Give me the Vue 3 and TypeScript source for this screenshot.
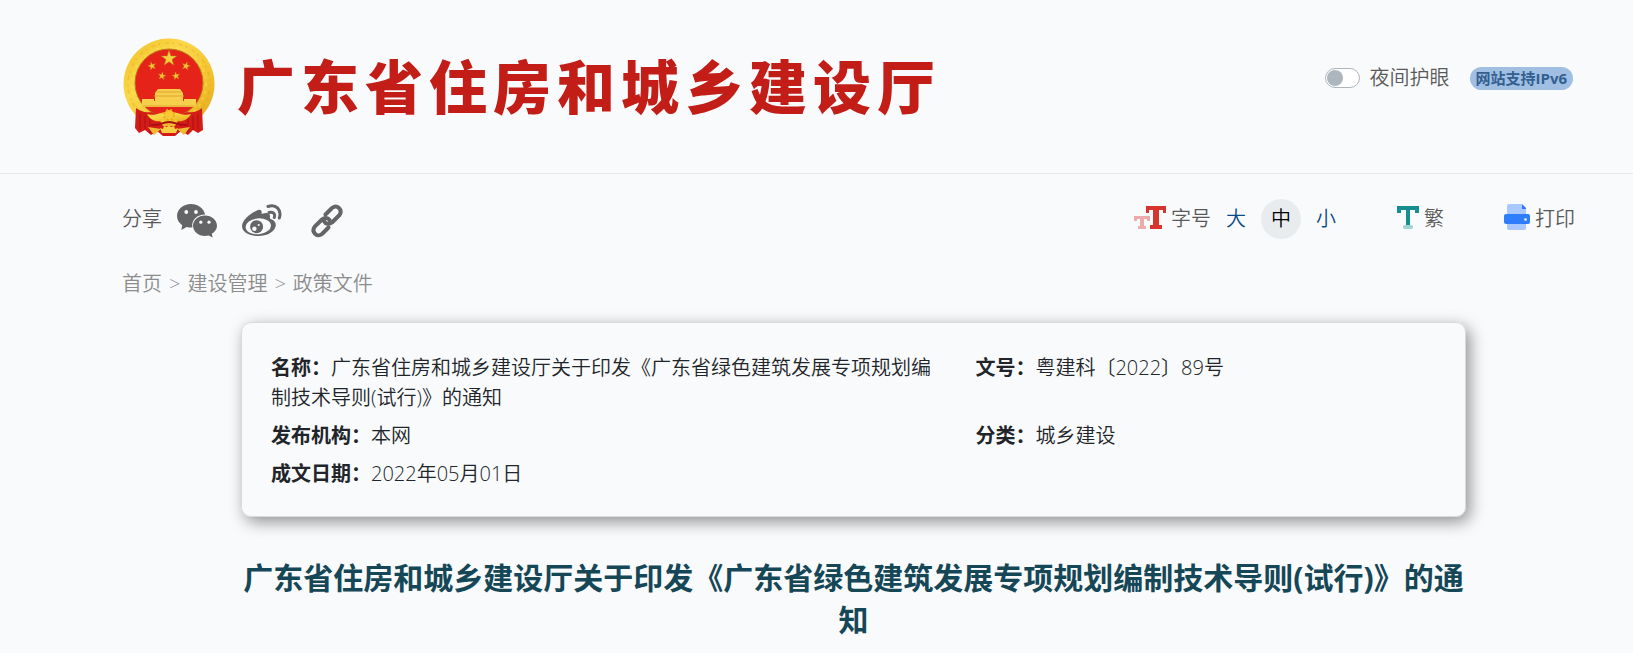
<script setup lang="ts">
import { ref } from 'vue'

interface Field {
  label: string
  value: string
}

const siteName = '广东省住房和城乡建设厅'
const docTitle = '广东省住房和城乡建设厅关于印发《广东省绿色建筑发展专项规划编制技术导则(试行)》的通知'

const nightMode = ref(false)
const sizes = ['大', '中', '小']
const activeSize = ref('中')

const crumbs = ['首页', '建设管理', '政策文件']

const fields: Field[] = [
  { label: '名称', value: docTitle },
  { label: '文号', value: '粤建科〔2022〕89号' },
  { label: '发布机构', value: '本网' },
  { label: '分类', value: '城乡建设' },
  { label: '成文日期', value: '2022年05月01日' },
]

const star = 'M0-10 2.3-3.1 9.5-3.1 3.7 1.2 5.9 8.1 0 3.9-5.9 8.1-3.7 1.2-9.5-3.1-2.3-3.1Z'
const smallStars = [
  'translate(29 28) rotate(-15) scale(.44)',
  'translate(63 28) rotate(15) scale(.44)',
  'translate(39 38) rotate(10) scale(.42)',
  'translate(53 38) rotate(-10) scale(.42)',
]
</script>

<template>
  <div class="page">
    <header class="site-header">
      <a class="brand" href="#">
        <svg class="emblem" viewBox="0 0 92 98" aria-hidden="true">
          <defs>
            <linearGradient id="gold" x1="0" y1="0" x2="1" y2="1">
              <stop offset="0" stop-color="#efbf24" />
              <stop offset=".35" stop-color="#fbd84a" />
              <stop offset=".7" stop-color="#f2c02c" />
              <stop offset="1" stop-color="#dda51c" />
            </linearGradient>
          </defs>
          <circle cx="46" cy="46" r="45.5" fill="url(#gold)" />
          <circle cx="46" cy="46" r="41" fill="none" stroke="#d9a21c" stroke-width="2" stroke-dasharray="2 5 4 3" opacity=".3" />
          <circle cx="46" cy="46" r="37" fill="none" stroke="#ffe268" stroke-width="2" stroke-dasharray="3 4" opacity=".4" />
          <circle cx="46" cy="45" r="34" fill="#e52318" stroke="#b8791a" stroke-width="1" />
          <path d="M13 70 C22 77 27 72 33 76 L40 88 L52 88 L59 76 C66 72 71 77 79 70 L80 92 L75 95 L70 92 L65 97 L58 93 L52 98 L40 98 L34 93 L28 97 L22 92 L16 95 L12 90Z" fill="#d31b18" />
          <path d="M17 76v16M22 78v13M27 79v16M65 79v15M70 78v14M75 76v16" stroke="#970f11" stroke-width="1" opacity=".65" />
          <path :d="star" transform="translate(46 20.500) scale(.82)" fill="#f9cf42" stroke="#b97614" stroke-width=".6" />
          <path v-for="t in smallStars" :key="t" :d="star" :transform="t" fill="#f5c538" stroke="#c07a17" stroke-width=".8" />
          <path d="M35 51h22l3 4v3H32v-3Z M32 57h28v6H32Z M19 61h12v2h30v-2h12v8H19Z" fill="#f7cf4d" />
          <path d="M34 54h24M31 58h30M20 68h52" stroke="#dca632" stroke-width="1" />
          <path d="M24 76 C34 79 38 72 46 75 C54 72 58 79 68 76 C64 84 55 85 50 81 L46 79 L42 81 C37 85 28 84 24 76Z" fill="url(#gold)" />
          <circle cx="46" cy="77" r="5" fill="#f8c832" stroke="#e8aa20" stroke-width="2" stroke-dasharray="2 2" />
          <path d="M25 89 38 91 31 97Z M67 89 54 91 61 97Z" fill="#eebb32" />
          <path d="M37 90l3 1 1-3 3 1 2-2 2 2 3-1 1 3 3-1-2 5H39Z" fill="#f8cf43" />
          <path d="M28 87C36 88 39 84 46 84S56 88 64 87" fill="none" stroke="#a90f12" stroke-width="2" />
        </svg>
        <span class="site-name">{{ siteName }}</span>
      </a>
      <div class="header-tools">
        <label class="night">
          <input v-model="nightMode" type="checkbox" role="switch" />
          <span>夜间护眼</span>
        </label>
        <span class="ipv6">网站支持IPv6</span>
      </div>
    </header>

    <div class="toolbar">
      <div class="share">
        <span>分享</span>
        <button type="button" aria-label="微信">
          <svg width="40" height="34" viewBox="0 0 40 34">
            <path d="M14 0C6.300 0 0 5.400 0 12c0 3.700 2 7 5.200 9.200L4.300 26l5.400-3.100c1.500.4 3 .5 4.500.5l1.200-.1C14 16 20.500 10.500 28.200 10.600 26.800 4.500 21 0 14 0Z" fill="#646567" />
            <path d="M28 11.500c-6.600 0-12 4.600-12 10.200S21.400 32 28 32c1.300 0 2.500-.2 3.700-.5l4 2-.9-3.700c3.200-1.900 5.200-4.800 5.200-8.100 0-5.600-5.400-10.200-12-10.200Z" fill="#646567" />
            <g fill="#f9fafc">
              <circle cx="9.300" cy="8" r="1.900" /><circle cx="19" cy="8" r="1.900" />
              <circle cx="23.800" cy="18.200" r="1.600" /><circle cx="32" cy="18.200" r="1.600" />
            </g>
          </svg>
        </button>
        <button type="button" aria-label="微博">
          <svg width="40" height="34" viewBox="0 0 40 34">
            <path d="M14 7C18 4.500 20.500 6 19.500 10c5-2 9-1.500 8.500 3-.2 1-.3 1.600.7 2 4 1.400 5.500 4 5 7C32.500 28 25 32 16.500 32S0 28.500 0 22C0 17 7 10 14 7Z" fill="#646567" />
            <ellipse cx="16.300" cy="22.300" rx="12.700" ry="7.900" transform="rotate(-5 16.300 22.300)" fill="#f9fafc" />
            <circle cx="14.600" cy="22.700" r="6.500" fill="#646567" />
            <circle cx="12.400" cy="24.700" r="2.200" fill="#f9fafc" />
            <circle cx="16.700" cy="21" r="1.100" fill="#f9fafc" />
            <path d="M26 2.500C34-.5 40 6 37.300 14M27 8.500c4-1 6.500 1.200 5.300 5" fill="none" stroke="#646567" stroke-width="3" stroke-linecap="round" />
          </svg>
        </button>
        <button type="button" aria-label="复制链接">
          <svg width="40" height="34" viewBox="0 0 40 34">
            <g fill="none" stroke="#646567" stroke-width="4" stroke-linecap="round" stroke-linejoin="round">
              <path d="M18.500 10.500 25 4c5-4 11 1.500 7.500 7L25 18.500c-3 2.400-6.500 1.500-8-1.500" />
              <path d="M21.500 23.500 15 30c-5 4-11-2-7.300-7.300L15 15.500c3-2.600 7-1.500 8 1.500" />
            </g>
          </svg>
        </button>
      </div>

      <div class="options">
        <div class="font-size" role="group" aria-label="字号">
          <span class="caption">
            <svg width="32" height="24" viewBox="0 0 32 24" aria-hidden="true">
              <path d="M0 11h16v5h-3v-2h-3v7h2v3H4v-3h2v-7H3v2H0Z" fill="#ecacad" />
              <path d="M12 1h20v7h-3V5h-4v15h3v4H16v-4h3V5h-4v3h-3Z" fill="#d7342e" />
            </svg>
            <span>字号</span>
          </span>
          <button
            v-for="s in sizes"
            :key="s"
            type="button"
            class="size"
            :class="{ active: s === activeSize }"
            :aria-pressed="s === activeSize"
            @click="activeSize = s"
          >{{ s }}</button>
        </div>
        <button type="button" class="action">
          <svg width="22" height="24" viewBox="0 0 22 24" aria-hidden="true">
            <path d="M0 1h22v7h-4V5h-5v15H9V5H4v3H0Z" fill="#178f90" />
            <rect x="6" y="20" width="10" height="4" rx="2" fill="#a0d1d3" />
          </svg>
          <span>繁</span>
        </button>
        <button type="button" class="action">
          <svg width="26" height="26" viewBox="0 0 26 26" aria-hidden="true">
            <path d="M5 0h13v5h4v6H3V2q0-2 2-2Z" fill="#a8c8ff" />
            <path d="M18 0l4 4v1h-4Z" fill="#2b78f5" />
            <path d="M3 16h19v8q0 2-2 2H5q-2 0-2-2Z" fill="#a8c8ff" />
            <rect y="10" width="26" height="10" rx="2" fill="#2d7dfd" />
            <circle cx="21.500" cy="15.500" r="1.300" fill="#fff" />
          </svg>
          <span>打印</span>
        </button>
      </div>
    </div>

    <nav class="crumbs" aria-label="当前位置">
      <template v-for="(c, i) in crumbs" :key="c">
        <span v-if="i > 0">&gt;</span>
        <a href="#">{{ c }}</a>
      </template>
    </nav>

    <main class="article">
      <dl class="info">
        <div v-for="f in fields" :key="f.label">
          <dt>{{ f.label }}：</dt>
          <dd>{{ f.value }}</dd>
        </div>
      </dl>
      <h1>{{ docTitle }}</h1>
    </main>
  </div>
</template>

<style>
body {
  background: #f9fafc;
}
</style>

<style scoped>
.page {
  color: #212529;
  font-family: "Open Sans", "Noto Sans CJK SC", sans-serif;
  font-size: 20px;
  font-weight: 350;
  line-height: 30px;
}

a {
  color: inherit;
  text-decoration: none;
}

button {
  display: flex;
  align-items: center;
  margin: 0;
  padding: 0;
  border: 0;
  background: none;
  color: inherit;
  font: inherit;
  cursor: pointer;
}

svg {
  display: block;
  flex: none;
}

.site-header {
  display: flex;
  justify-content: space-between;
  padding: 38px 60px 37px 123px;
  border-bottom: 1px solid #e4e7eb;
}

.brand {
  display: flex;
  align-items: center;
  gap: 22px;
}

.emblem {
  width: 92px;
  height: 98px;
}

.site-name {
  color: #c21e17;
  font-size: 58px;
  font-weight: 900;
  line-height: 76px;
  letter-spacing: 6px;
  white-space: nowrap;
}

.header-tools {
  display: flex;
  align-items: center;
  align-self: flex-start;
  gap: 20px;
  padding-top: 25px;
  color: #595959;
}

.night {
  display: flex;
  align-items: center;
  gap: 10px;
}

.night input {
  display: flex;
  align-items: center;
  box-sizing: border-box;
  width: 35px;
  height: 20px;
  margin: 0;
  padding: 1px;
  border: 1px solid #adb5bd;
  border-radius: 10px;
  background: #fff;
  appearance: none;
}

.night input::before {
  width: 16px;
  height: 16px;
  border-radius: 50%;
  background: #adb5bd;
  content: "";
}

.night input:checked {
  justify-content: flex-end;
}

.ipv6 {
  padding: 0 6px;
  border-radius: 12px;
  background: #a0bfe3;
  color: #335f91;
  font-size: 15px;
  font-weight: 700;
  line-height: 23px;
}

.toolbar {
  display: flex;
  align-items: center;
  justify-content: space-between;
  padding: 25px 58px 0 122px;
  color: #595959;
}

.share {
  display: flex;
  align-items: center;
  gap: 25px;
}

.share span {
  margin-right: -10px;
}

.share svg {
  margin-top: 4px;
}

.options,
.font-size {
  display: flex;
  align-items: center;
}

.options {
  gap: 60px;
}

.font-size {
  gap: 5px;
  margin-right: -9px;
}

.caption,
.action {
  display: flex;
  align-items: center;
  gap: 5px;
}

.options svg {
  margin-bottom: 4px;
}

.size {
  justify-content: center;
  width: 40px;
  height: 40px;
  border-radius: 50%;
  color: #0b4a86;
}

.size.active {
  background: #e9ecef;
  color: #000;
}

.crumbs {
  display: flex;
  gap: 7px;
  padding: 30px 122px 0;
  color: #8c8c8c;
}

.article {
  padding: 23px 167px 12px 241px;
}

.info {
  display: grid;
  grid-template-columns: 3fr 2fr;
  row-gap: 8px;
  margin: 0;
  padding: 30px 20px 27px 29px;
  border: 1px solid #d9dadc;
  border-radius: 10px;
  box-shadow: 4px 5px 16px rgba(0, 0, 0, 0.42);
}

.info div {
  padding-right: 40px;
}

.info dt,
.info dd {
  display: inline;
  margin: 0;
}

.info dt {
  font-weight: 700;
}

h1 {
  margin: 40px 0 0;
  color: #154757;
  font-size: 30px;
  font-weight: 700;
  line-height: 42px;
  text-align: center;
}
</style>
